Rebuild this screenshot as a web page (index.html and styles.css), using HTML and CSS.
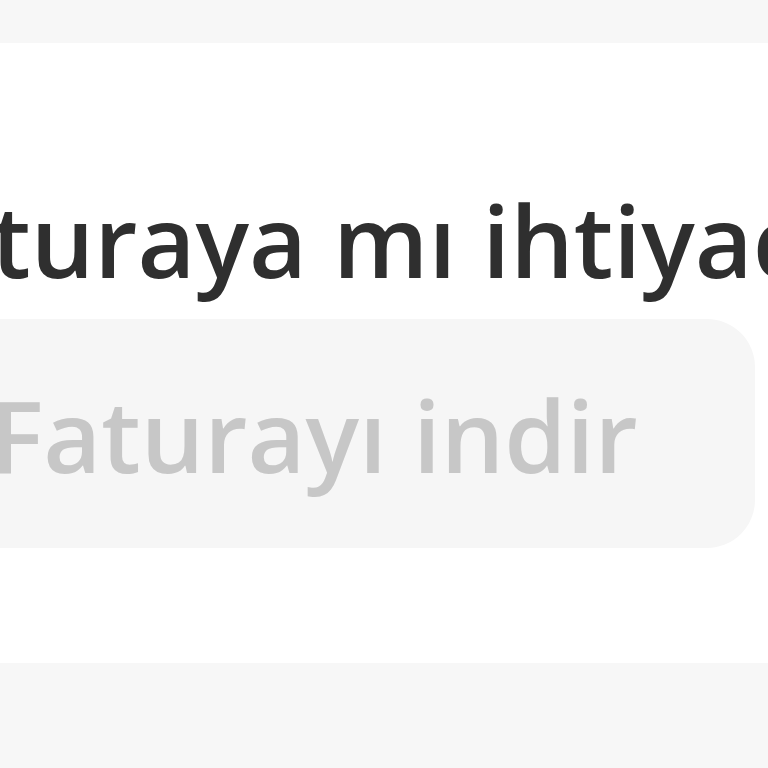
FILE: index.html
```html
<!DOCTYPE html>
<html lang="tr">
<head>
    <meta charset="UTF-8">
    <meta name="viewport" content="width=device-width, initial-scale=1.0">
    <title>Fatura</title>
    <link rel="stylesheet" href="styles.css">
</head>
<body>
    <div class="card">
        <div class="invoice-box">
            <h2 class="invoice-title">Faturaya mı ihtiyacınız var?</h2>
            <button class="download-btn" disabled>Faturayı indir</button>
        </div>
    </div>
</body>
</html>
```

FILE: styles.css
```css
body {
    margin: 0;
    background: #f7f7f7;
    font-family: "Open Sans", "Noto Sans", sans-serif;
    overflow: hidden;
}

.card {
    margin-top: 43px;
    height: 620px;
    background: #fff;
    overflow: hidden;
}

.invoice-box {
    margin-left: -120px;
    padding-top: 128px;
}

.invoice-title {
    margin: 0;
    font-size: 100px;
    font-weight: 600;
    line-height: normal;
    color: #2f2f2f;
    white-space: nowrap;
}

.download-btn {
    display: block;
    box-sizing: border-box;
    width: 875px;
    margin-top: 12px;
    padding: 47px 0 46px 110px;
    border: none;
    border-radius: 48px;
    background: #f6f6f6;
    color: #c7c7c7;
    font-family: inherit;
    font-size: 100px;
    font-weight: 600;
    line-height: normal;
    text-align: left;
    white-space: nowrap;
}
```
